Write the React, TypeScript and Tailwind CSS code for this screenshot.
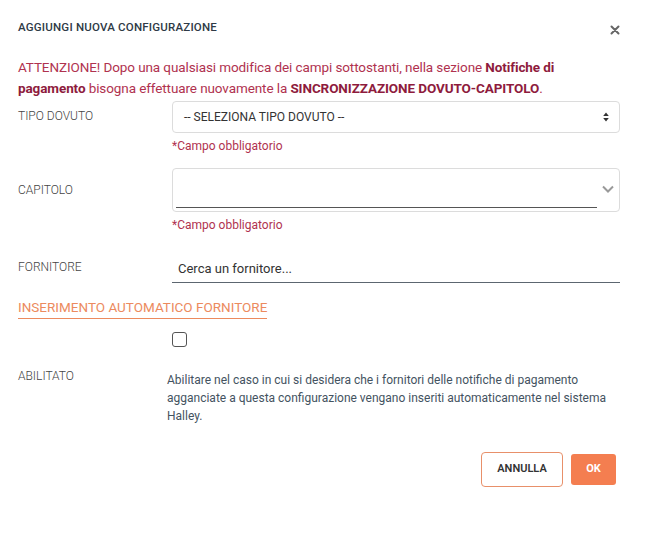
import React from "react";

export default function App() {
  return (
    <div className="w-[650px] h-[540px] bg-white font-['Roboto',sans-serif] text-[#333]">
      <div className="pl-[18px] pr-[30px] pt-[20px]">
        <div className="flex items-center justify-between h-[16px]">
          <h2 className="text-[11.5px] font-medium tracking-[0.2px] text-[#2f3a46]">AGGIUNGI NUOVA CONFIGURAZIONE</h2>
          <svg width="10" height="10" viewBox="0 0 10 10" className="mt-[4px]">
            <path d="M1.5 1.5 L8.5 8.5 M8.5 1.5 L1.5 8.5" stroke="#666" strokeWidth="2" strokeLinecap="round" />
          </svg>
        </div>
        <p className="mt-[21px] text-[13.5px] leading-[21px] text-[#b0324f] tracking-[-0.1px]">
          ATTENZIONE! Dopo una qualsiasi modifica dei campi sottostanti, nella sezione{" "}
          <b className="font-bold text-[#8e1b3d]">Notifiche di</b>
          <br />
          <b className="font-bold text-[#8e1b3d]">pagamento</b> bisogna effettuare nuovamente la{" "}
          <b className="font-bold text-[#8e1b3d]">SINCRONIZZAZIONE DOVUTO-CAPITOLO</b>.
        </p>

        <div className="flex mt-[2px]">
          <div className="w-[154px] text-[12px] font-light text-[#444] pt-[6px]">TIPO DOVUTO</div>
          <div className="flex-1">
            <div className="h-[32px] border border-[#dcdcdc] rounded-[4px] flex items-center justify-between pl-[11px] pr-[10px]">
              <span className="text-[12px] text-[#333]">-- SELEZIONA TIPO DOVUTO --</span>
              <svg width="6" height="10" viewBox="0 0 6 10">
                <path d="M3 0.5 L5.8 4 L0.2 4 Z M3 9.5 L5.8 6 L0.2 6 Z" fill="#333" />
              </svg>
            </div>
            <div className="text-[12px] text-[#b0324f] mt-[5px] leading-[16px]">*Campo obbligatorio</div>
          </div>
        </div>

        <div className="flex mt-[14px]">
          <div className="w-[154px] text-[12px] font-light text-[#444] pt-[13px]">CAPITOLO</div>
          <div className="flex-1">
            <div className="h-[44px] border border-[#dcdcdc] rounded-[4px] flex items-start pl-[3px] pr-[5px]">
              <div className="flex-1 h-[39px] border-b border-[#555]"></div>
              <svg width="12" height="8" viewBox="0 0 12 8" className="mt-[16px] ml-[5px]">
                <path d="M1 1.5 L6 6.5 L11 1.5" stroke="#999" strokeWidth="2" fill="none" />
              </svg>
            </div>
            <div className="text-[12px] text-[#b0324f] mt-[5px] leading-[16px]">*Campo obbligatorio</div>
          </div>
        </div>

        <div className="flex mt-[20px]">
          <div className="w-[154px] text-[12px] font-light text-[#444] pt-[5px]">FORNITORE</div>
          <div className="flex-1 h-[30px] border-b border-[#5c6670] pl-[6px] pt-[3px]">
            <span className="text-[13px] text-[#333]">Cerca un fornitore...</span>
          </div>
        </div>

        <div className="mt-[12px]">
          <span className="inline-block text-[13.5px] text-[#ec8a5e] border-b border-[#ec8a5e] pb-[1px] leading-[20px]">INSERIMENTO AUTOMATICO FORNITORE</span>
        </div>

        <div className="flex mt-[13px]">
          <div className="w-[154px]"></div>
          <div className="w-[15px] h-[15px] border border-[#555] rounded-[3px]"></div>
        </div>

        <div className="flex mt-[19px]">
          <div className="w-[149px] text-[12px] font-light text-[#444] pt-[1px]">ABILITATO</div>
          <p className="flex-1 text-[12px] leading-[18px] text-[#44535f] pr-[6px] pt-[5px]">
            Abilitare nel caso in cui si desidera che i fornitori delle notifiche di pagamento agganciate a questa configurazione vengano inseriti automaticamente nel sistema Halley.
          </p>
        </div>

        <div className="flex justify-end gap-[8px] mt-[27px] pr-[4px] items-center">
          <button className="w-[82px] h-[35px] border border-[#e8906a] rounded-[4px] text-[11px] font-semibold text-[#333]">ANNULLA</button>
          <button className="w-[45px] h-[31px] bg-[#f47e50] rounded-[3px] text-[11px] font-bold text-white">OK</button>
        </div>
      </div>
    </div>
  );
}
